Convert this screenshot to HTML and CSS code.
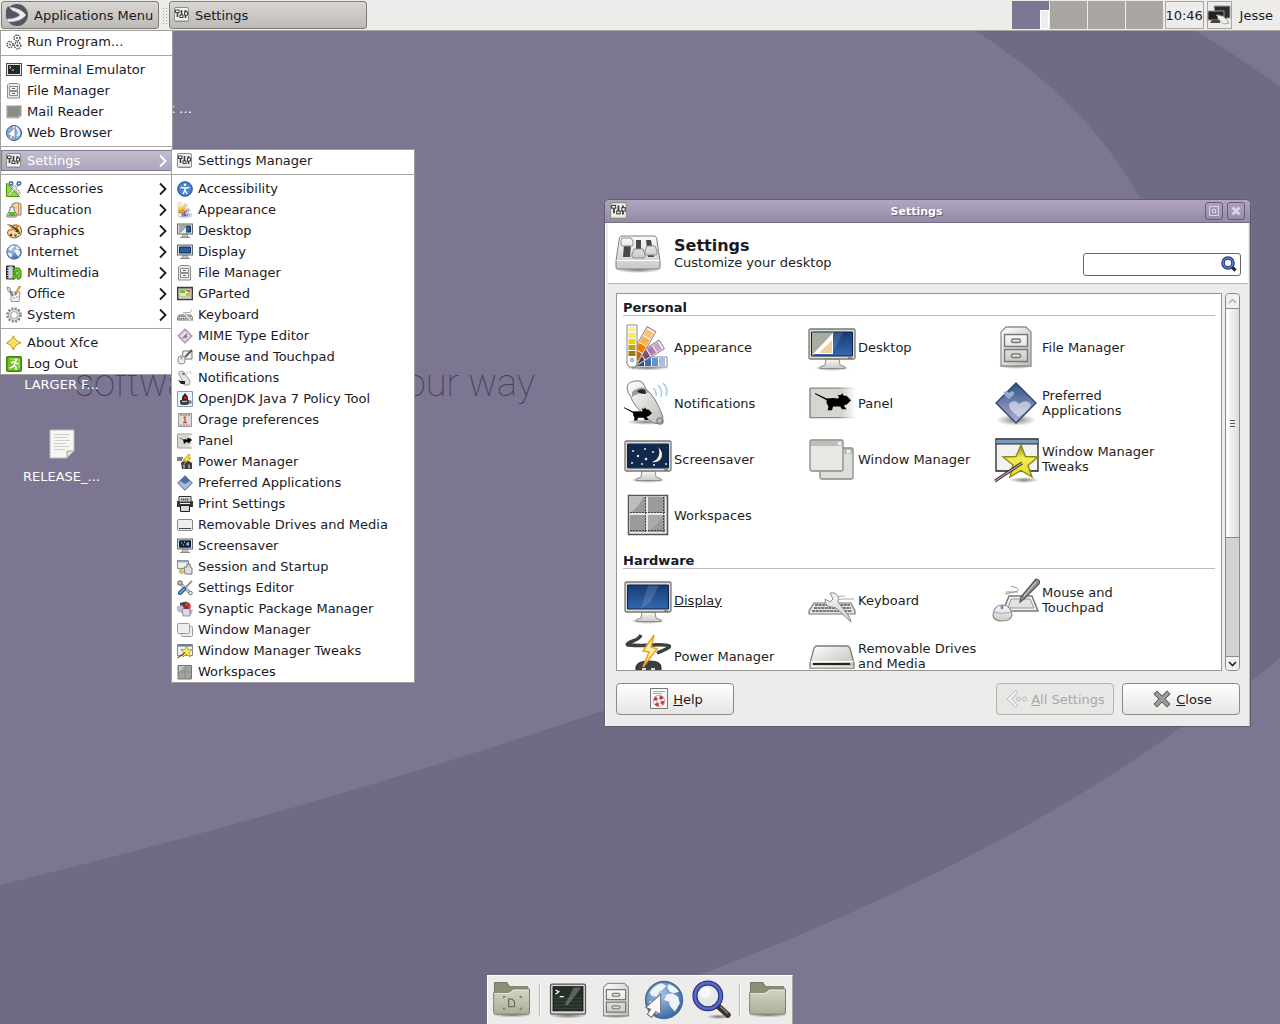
FILE: index.html
```html
<!DOCTYPE html>
<html lang="en">
<head>
<meta charset="utf-8">
<title>Xfce Desktop</title>
<link rel="stylesheet" href="styles.css">
</head>
<body>
<svg class="defs" aria-hidden="true">
<defs>
<linearGradient id="g-light" x1="0" y1="0" x2="0" y2="1"><stop offset="0" stop-color="#fafafa"/><stop offset="1" stop-color="#c9cac6"/></linearGradient>
<linearGradient id="g-metal" x1="0" y1="0" x2="1" y2="1"><stop offset="0" stop-color="#fff"/><stop offset="1" stop-color="#babdb6"/></linearGradient>
<linearGradient id="g-blue" x1="0" y1="0" x2="0" y2="1"><stop offset="0" stop-color="#163a72"/><stop offset="1" stop-color="#3568b0"/></linearGradient>
<linearGradient id="g-pref" x1="0" y1="0" x2="0" y2="1"><stop offset="0" stop-color="#2c5486"/><stop offset="1" stop-color="#b3aed4"/></linearGradient>
<linearGradient id="g-folder" x1="0" y1="0" x2="0" y2="1"><stop offset="0" stop-color="#d3d5c3"/><stop offset="1" stop-color="#acae96"/></linearGradient>
<linearGradient id="g-star" x1="0" y1="0" x2="0" y2="1"><stop offset="0" stop-color="#8f8a20"/><stop offset=".4" stop-color="#f2ec55"/><stop offset="1" stop-color="#e0d820"/></linearGradient>
<linearGradient id="g-fade" x1="0" y1="0" x2="1" y2="0"><stop offset="0" stop-color="#d3d7cf"/><stop offset=".7" stop-color="#d3d7cf"/><stop offset="1" stop-color="#fff"/></linearGradient>
<linearGradient id="g-fadeline" x1="0" y1="0" x2="1" y2="0"><stop offset="0" stop-color="#888a85"/><stop offset=".6" stop-color="#888a85"/><stop offset="1" stop-color="#fff"/></linearGradient>
<radialGradient id="g-globe" cx=".4" cy=".35" r=".7"><stop offset="0" stop-color="#a9c6ea"/><stop offset="1" stop-color="#3465a4"/></radialGradient>
<radialGradient id="g-shadow"><stop offset="0" stop-color="#000" stop-opacity=".5"/><stop offset="1" stop-color="#000" stop-opacity="0"/></radialGradient>
</defs>

<symbol id="i-mixer-small" viewBox="0 0 16 16"><rect x=".5" y=".5" width="14" height="14" rx="1.500" fill="#f0f0ee" stroke="#8b8d88"/><path d="M1 13.500h13" stroke="#c4c5c2"/><path d="M3.500 5v5M7.500 3v5M11.500 3v8" stroke="#3c3f3d" stroke-width="1.600"/><g fill="#fff" stroke="#3c3f3d"><rect x="1.500" y="3" width="3.500" height="2.500"/><rect x="6" y="8" width="3" height="2.500"/><rect x="10.500" y="5" width="3" height="3"/></g></symbol>
<symbol id="i-mixer" viewBox="0 0 48 48"><ellipse cx="24" cy="41" rx="24" ry="3" fill="url(#g-shadow)"/><path d="M8 7h32q2 0 2.600 2L46 32v6q0 2-2 2H4q-2 0-2-2v-6L5.400 9Q6 7 8 7z" fill="url(#g-light)" stroke="#7c7e79"/><path d="M2.500 31.500h43" stroke="#fff"/><path d="M10 16h7l-1 12H9zM22 11h5v10h-5zM32 11h5l3 17h-6z" fill="#454947"/><g fill="url(#g-light)" stroke="#8d8f8a"><path d="M8 9h9l2 3v4l-1 1H8l-1-1v-4zM20 20h9l2 5v3l-1 1H19l-1-1v-3zM33 17h8l2 5v3l-1 1H32l-1-1v-3z"/></g></symbol>
<symbol id="i-xfce" viewBox="0 0 24 24"><circle cx="12" cy="12" r="11" fill="#57545f"/><path d="M4 4q12 1 17 8-5 7-18 7l-1-3q9 0 13-4Q12 8 3 7z" fill="#eee" stroke="#a9a7b4" stroke-width=".7"/><path d="M3 3q5 6 10 9-5 3-12 3V7z" fill="#57545f"/></symbol>
<symbol id="i-run" viewBox="0 0 16 16"><g fill="#fff" stroke="#4a4a4a" stroke-dasharray="1.500 .9" stroke-width="1.300"><circle cx="11" cy="4" r="3"/><circle cx="4" cy="10.500" r="3"/><circle cx="11.500" cy="11.500" r="3.300"/></g><g fill="#666"><circle cx="11" cy="4" r="1"/><circle cx="4" cy="10.500" r="1"/><circle cx="11.500" cy="11.500" r="1.200"/></g></symbol>
<symbol id="i-terminal" viewBox="0 0 48 48"><ellipse cx="24" cy="43" rx="23" ry="3" fill="url(#g-shadow)"/><rect x="3" y="5" width="42" height="36" rx="2" fill="#d5d7d3" stroke="#555753" stroke-width="1.500"/><rect x="6" y="8" width="36" height="29" fill="#253029" stroke="#111"/><path d="M7 22h34M7 26h34M7 30h34M7 34h34" stroke="#3b4a41"/><path d="M31 9h9L24 30h-4z" fill="#fff" opacity=".25"/><path d="M9 12l4 2-4 3M14 20h5" fill="none" stroke="#fff" stroke-width="1.500"/></symbol>
<symbol id="i-terminal-small" viewBox="0 0 16 16"><rect x=".5" y="1.500" width="15" height="12" fill="#e4e5e3" stroke="#4c4f4c"/><rect x="2" y="3" width="12" height="9" fill="#232b28"/><path d="M3.500 4.500l1.500 1-1.500 1M6 8h2" fill="none" stroke="#fff" stroke-width=".9"/></symbol>
<symbol id="i-files" viewBox="0 0 48 48"><ellipse cx="24" cy="43" rx="18" ry="3" fill="url(#g-shadow)"/><path d="M14 4h20l5 5v34H9V9z" fill="url(#g-metal)" stroke="#8d908a" stroke-width="1.300"/><g fill="url(#g-light)" stroke="#777a74" stroke-width="1.400"><path d="M12.500 11.500h23v12h-23zM12.500 26.500h23v12h-23z"/><rect x="19.500" y="16" width="9" height="3.500" rx="1.500"/><rect x="19.500" y="31" width="9" height="3.500" rx="1.500"/></g></symbol>
<symbol id="i-files-small" viewBox="0 0 16 16"><path d="M3 .5h9l1.500 1.500v13h-12V2z" fill="#e8e9e6" stroke="#8b8d88"/><path d="M3.500 3.500h8v4h-8zM3.500 8.500h8v4h-8z" fill="#f4f4f2" stroke="#8b8d88"/><path d="M6 5.500h3M6 10.500h3" stroke="#666"/></symbol>
<symbol id="i-mail" viewBox="0 0 16 16"><path d="M.5 1.500h15v10l-3 2.500H.5z" fill="#9d9f9b" stroke="#c9c9c9"/><path d="M2 3l12-.5v8L12 12.500H2z" fill="#8b8d88"/><path d="M11 14l1.500-3 2.500.5z" fill="#ddd" stroke="#777" stroke-width=".5"/></symbol>
<symbol id="i-globe" viewBox="0 0 48 48"><circle cx="24" cy="24" r="22" fill="url(#g-globe)" stroke="#4a6c9b" stroke-width="2"/><path d="M7 15q5-9 14-11l6 3-5 5-4 2-3 6-6-1zM29 5q9 2 13 9l-6 2-5-2-3-5zM27 17l7-1 7 4 2 8-6 10-6-7-1-5-6-2zM7 25l7 2 5 5-2 5-1 4Q9 37 6 31z" fill="#eef3f8"/></symbol>
<symbol id="i-web" viewBox="0 0 48 48"><use href="#i-globe"/><path d="M20 17v24l-6-3-5 7-5-4 4-6-6-2z" fill="#fafafa" stroke="#777" stroke-width="1.300"/></symbol>
<symbol id="i-web-small" viewBox="0 0 16 16"><circle cx="8" cy="8" r="7.500" fill="#88aeda" stroke="#34588b"/><path d="M8 1v4M10 2q3 3 3 7l-2 2" stroke="#e7eff8" stroke-width="2" fill="none"/><path d="M9 2.500v11L6.500 11l-1 3.500-2-1 1-3.500H1z" fill="#fff" stroke="#7b8088" stroke-width=".8"/></symbol>
<symbol id="i-accessories" viewBox="0 0 16 16"><path d="M.5 2l13 13.500H.5z" fill="#8ae234" stroke="#4e9a06"/><path d="M4 11v1.500h2z" fill="#fff"/><path d="M12 3L3 14M5 4l9 9" stroke="#888a85" stroke-width="2.600"/><path d="M12 3L3 14M5 4l9 9" stroke="#eee" stroke-width="1.200"/><g fill="none" stroke="#3465a4" stroke-width="1.500"><circle cx="5" cy="2.500" r="1.700"/><circle cx="13" cy="2.500" r="1.700"/></g></symbol>
<symbol id="i-education" viewBox="0 0 16 16"><path d="M6 2q5-3 9 0v11H7z" fill="#e6d6bc" stroke="#8f7e62"/><path d="M12.500 2v10" stroke="#e08a3a"/><path d="M4 5h4v3l3 5q0 2-2 2H2q-2 0-1-2l3-5z" fill="#eee" stroke="#777"/><path d="M3.500 10h5l1.500 4H2z" fill="#57b926"/></symbol>
<symbol id="i-graphics" viewBox="0 0 16 16"><path d="M8 2q7-1 7.500 6 0 6-7 7-7-1-7-6 1-3 3-2 3 0 1-3 0-1 2.500-2z" fill="#f5d9a5" stroke="#8f5902"/><path d="M1 1l9 8 4 1-2-4-9-5z" fill="#5a3a10"/><path d="M2 1l8 7" stroke="#e9b96e"/><circle cx="11" cy="4" r="1.300" fill="#f57900"/><circle cx="5" cy="12" r="1.300" fill="#c00"/><circle cx="9.500" cy="12.500" r="1.300" fill="#3465a4"/><circle cx="13" cy="10" r="1.300" fill="#4e9a06"/></symbol>
<symbol id="i-media" viewBox="0 0 16 16"><path d="M.5 1h8v13h-8z" fill="#cfd6e4" stroke="#333"/><path d="M1.500 1v13M7.500 1v13" stroke="#222" stroke-width="1.600" stroke-dasharray="1.500 1"/><path d="M8 3l5 0q2 1 2 4v5q-1 3-4 2V10q2-1 1-4l-2 0v6q-1 3-3 2-1-2 1-3z" fill="#6ed41b" stroke="#3a7d05"/></symbol>
<symbol id="i-office" viewBox="0 0 16 16"><path d="M5 6h9l-1 9.500H5z" fill="#f2f2f2" stroke="#999"/><path d="M2 2l5 8M14 0L9 9" stroke="#777" stroke-width="2"/><path d="M1 1l3 1 1 4-3-1z" fill="#ddd" stroke="#666" stroke-width=".6"/><path d="M13.500 1l-3 6" stroke="#e9a33b" stroke-width="2"/><path d="M7 12h2" stroke="#d77"/><path d="M10 11h2" stroke="#88b"/></symbol>
<symbol id="i-system" viewBox="0 0 16 16"><circle cx="8" cy="8" r="6.500" fill="none" stroke="#888" stroke-width="2.600" stroke-dasharray="2 1.400"/><circle cx="8" cy="8" r="4.500" fill="none" stroke="#8b8b8b" stroke-width="3"/><circle cx="8" cy="8" r="4.500" fill="none" stroke="#dcdcdc" stroke-width="1.800"/></symbol>
<symbol id="i-about" viewBox="0 0 16 16"><path d="M7.500.8q1.500 5.200 7.500 7-6 1.700-7.500 7.200Q6 9.500.5 7.800 6 6 7.500.8z" fill="#f8e35a" stroke="#b8981a"/></symbol>
<symbol id="i-logout" viewBox="0 0 16 16"><rect x=".8" y=".8" width="14.400" height="14.400" rx="1" fill="#73c22b" stroke="#3f7f08" stroke-width="1.500"/><path d="M4 3h9v9" fill="none" stroke="#b4e67e"/><circle cx="10" cy="4" r="1.300" fill="#fff"/><path d="M5 7l3-1.500L9.500 6 8 9.500l2 1.500v3M8 9.500L6.500 11 3.500 12M9.500 7l3 1" fill="none" stroke="#fff" stroke-width="1.500"/></symbol>
<symbol id="i-access" viewBox="0 0 16 16"><circle cx="8" cy="8" r="7.300" fill="#4a82cc" stroke="#204a87"/><circle cx="8" cy="3.800" r="1.300" fill="#fff"/><path d="M3.500 6.500L8 7l4.500-.5M8 6.500V9l-2 4M8 9l2 4" stroke="#fff" stroke-width="1.500" fill="none"/></symbol>
<symbol id="i-appearance" viewBox="0 0 48 48"><ellipse cx="23" cy="45" rx="22" ry="2.500" fill="url(#g-shadow)"/><path d="M8 34h35v10H8z" fill="#fff" stroke="#888"/><path d="M14 35h6v8h-6z" fill="#204a87"/><path d="M21 35h6v8h-6z" fill="#3a6cae"/><path d="M28 35h6v8h-6z" fill="#5e94cf"/><path d="M35 35h6v8h-6z" fill="#9ec0e6"/><g transform="rotate(58 8 40)"><path d="M3 5h10v37H3z" fill="#fff" stroke="#888"/><path d="M4 7h8v6H4z" fill="#c9a4c6"/><path d="M4 14h8v6H4z" fill="#ad7fa8"/><path d="M4 21h8v6H4z" fill="#75507b"/><path d="M4 28h8v8H4z" fill="#4c2f52"/></g><g transform="rotate(30 8 40)"><path d="M3 1h10v41H3z" fill="#fff" stroke="#888"/><path d="M4 3h8v7H4z" fill="#fcc274"/><path d="M4 11h8v7H4z" fill="#fcaf3e"/><path d="M4 19h8v7H4z" fill="#f57900"/><path d="M4 27h8v8H4z" fill="#ce5c00"/></g><path d="M3 2h10v39l-2 3H5l-2-3z" fill="#fff" stroke="#888"/><path d="M4.500 4h7v5h-7z" fill="#fcef94"/><path d="M4.500 10h7v5h-7z" fill="#fce94f"/><path d="M4.500 16h7v5h-7z" fill="#edd400"/><path d="M4.500 22h7v5h-7z" fill="#c4a000"/><path d="M4.500 28h7v5h-7z" fill="#9a7e05"/><circle cx="8" cy="37" r="1.500" fill="none" stroke="#777"/></symbol>
<symbol id="i-display" viewBox="0 0 48 48"><ellipse cx="24" cy="45" rx="18" ry="3" fill="url(#g-shadow)"/><path d="M18 36h13l1 6 5 2v1.500H12V44l5-2z" fill="url(#g-light)" stroke="#8d8f8a"/><rect x="1" y="6" width="46" height="30" rx="1.500" fill="#dcddd7" stroke="#777974" stroke-width="1.300"/><path d="M3.500 9h41v24h-41z" fill="url(#g-blue)" stroke="#0d2447"/><path d="M24 9.500h11L26 27l-9 5z" fill="#fff" opacity=".14"/><path d="M40 35h4" stroke="#555"/></symbol>
<symbol id="i-display-small" viewBox="0 0 16 16"><path d="M6 11h4l1 3H5z" fill="#ccc" stroke="#999"/><path d="M3 14.500h10" stroke="#888"/><rect x=".5" y="1" width="15" height="10" fill="#dcddd7" stroke="#666864"/><path d="M2.500 3h11v6h-11z" fill="#2a5ba3" stroke="#12305c"/></symbol>
<symbol id="i-desktop" viewBox="0 0 48 48"><use href="#i-display"/><path d="M4 9.500h22L5 32.500H4z" fill="#a9aca5"/><path d="M5 31L25 10v21z" fill="#fff"/><path d="M11 30L24 17v13z" fill="#f3cfa0"/></symbol>
<symbol id="i-desktop-small" viewBox="0 0 16 16"><use href="#i-display-small"/><path d="M2 2.500h8L3 9.500H2z" fill="#a9aca5"/><path d="M3 10L9 4v6z" fill="#f5e6cf"/></symbol>
<symbol id="i-saver" viewBox="0 0 48 48"><use href="#i-display"/><path d="M4 9.500h40v23H4z" fill="#13294c"/><path d="M34 12q7 6 2 13-4 3-8 2 6-2 7-7 1-5-1-8z" fill="#fbf6d8"/><g fill="#dfe9fa"><circle cx="9" cy="16" r="1"/><circle cx="14" cy="21" r="1.200"/><circle cx="21" cy="14" r="1"/><circle cx="8" cy="28" r="1"/><circle cx="22" cy="24" r="1.300"/><circle cx="29" cy="17" r="1"/><circle cx="30" cy="30" r="1"/><circle cx="18" cy="29" r="1"/><circle cx="42" cy="29" r="1"/></g></symbol>
<symbol id="i-saver-small" viewBox="0 0 16 16"><use href="#i-display-small"/><path d="M2.500 3h11v6h-11z" fill="#12264a" stroke="#0c1830"/><path d="M4 5h1M6 7h1M7 4h1M9 6h3M11 4v4" stroke="#c9d8ee"/></symbol>
<symbol id="i-gparted" viewBox="0 0 16 16"><path d="M.5 1.500h15v12H.5z" fill="#aaa" stroke="#3c3c3c" stroke-width="1.300"/><path d="M2.500 3.500h11v7h-11z" fill="#f7e2a0"/><path d="M3 4h5v3H3z" fill="#6cc04a"/><path d="M8 4h5v3z" fill="#e9503a"/><path d="M9 10V7h4v3z" fill="#8bd36a"/><path d="M2 12h12" stroke="#eee"/></symbol>
<symbol id="i-keyboard" viewBox="0 0 48 48"><path d="M6 27h37l4 8v3H1v-3z" fill="#e4e5e2" stroke="#777974" stroke-width="1.200"/><path d="M7 29h35M6 32h37M4 35h40" stroke="#777974" stroke-width="2.200" stroke-dasharray="3 .6"/><path d="M46 23H34q-5 1-5-1t8-2" fill="none" stroke="#aaa"/><path d="M22 17l3 6-3 3-5-3q0 8 7 8l4 1 15 14q0-3-3-7L30 26q2-7-4-9z" fill="url(#g-light)" stroke="#8b8d88"/></symbol>
<symbol id="i-keyboard-small" viewBox="0 0 16 16"><path d="M2 8h12l2 3v2H.5v-2z" fill="#ddd" stroke="#777"/><path d="M2 9.500h12M1.500 11.500h13" stroke="#666" stroke-dasharray="1.500 .6"/><path d="M8 5.500h5q2-1 1-3" fill="none" stroke="#aaa"/><path d="M6 6l3 2 5 6" fill="none" stroke="#999" stroke-width="2.500"/><path d="M6 6l3 2 5 6" fill="none" stroke="#eee" stroke-width="1.200"/></symbol>
<symbol id="i-mime" viewBox="0 0 16 16"><path d="M8 .7L15.300 8 8 15.300.7 8z" fill="#c9b3cc" stroke="#75507b" stroke-dasharray="1.200 .6"/><path d="M8 3l5 5-5 5-5-5z" fill="#e6d9e8"/><path d="M6 10l4-4M8 10l2-2" stroke="#8b6a92" stroke-width="1.300"/></symbol>
<symbol id="i-mouse" viewBox="0 0 48 48"><path d="M17 20h23l6 15H11z" fill="#f1f1f0" stroke="#777974" stroke-width="1.500"/><path d="M19 23h19l4 9H16z" fill="#e2e3e0" stroke="#999"/><path d="M13 18q18-3 12-6l-6-2M14 16h12" fill="none" stroke="#999"/><path d="M44 3q5 1 3 5L32 23l-4 3 1-5z" fill="#8e908c" stroke="#555" stroke-width="1.200"/><path d="M44 6L32 20" stroke="#ddd"/><path d="M10 29q9 0 10 10-1 6-10 6T1 39q1-10 9-10z" fill="url(#g-light)" stroke="#888a85" stroke-width="1.200"/><path d="M1.500 36q9 3 18 0" fill="none" stroke="#aaa"/><ellipse cx="10" cy="31" rx="1.500" ry="2.500" fill="#5b93dd"/></symbol>
<symbol id="i-mouse-small" viewBox="0 0 16 16"><path d="M6 2h9v8H5z" fill="#f1f1f0" stroke="#777"/><path d="M15 1L8 8" stroke="#555" stroke-width="1.800"/><rect x="1" y="7" width="7" height="8" rx="3" fill="#eee" stroke="#888"/><path d="M4.500 7.500v3" stroke="#7fb0e6" stroke-width="2"/></symbol>
<symbol id="i-rat" viewBox="0 0 40 22"><path d="M0 0l13 6q8-1 12 0l2-1-2-3 4 0 1-2 2 3 3 0 5 5-4 4-4 2 3 4h-5l-2-3h-8l-1 4h-5l1-4q-3-4-2-7L0 1z" fill="#000"/></symbol>
<symbol id="i-notify" viewBox="0 0 48 48"><ellipse cx="22" cy="43" rx="20" ry="3" fill="url(#g-shadow)"/><path d="M3 8q1-5 8-6 6-1 8 2l3 6q10 8 17 28l-2 6q-6 2-12-3Q8 25 7 18q-4-4-4-10z" fill="url(#g-metal)" stroke="#7b7d78"/><path d="M8 13q7-6 13-4l4 5q-9-1-17 4z" fill="#9ba096"/><path d="M13 12q5-3 8-1l1 4q-7 0-9-3z" fill="#222"/><circle cx="36" cy="42" r="3" fill="none" stroke="#888" stroke-width="1.500"/><path d="M29 9q4 3 3 8M34 6q5 5 3 12M39 4q6 6 3 13" fill="none" stroke="#7fb0e6" stroke-width="1.500" stroke-opacity=".7"/><use href="#i-rat" x="0" y="28" width="28" height="16"/></symbol>
<symbol id="i-notify-small" viewBox="0 0 16 16"><path d="M2 2q3-2 5 0l6 9-1 4H7L3 6Q1 4 2 2z" fill="#e4e5e2" stroke="#999"/><path d="M4 4l3-1 1 2z" fill="#444"/><path d="M1 10l3 1h4v3H4z" fill="#222"/><path d="M10 2l1 2M13 1l1 3" stroke="#9cc2ec"/></symbol>
<symbol id="i-java" viewBox="0 0 16 16"><path d="M.5.500h15v15H.5z" fill="#eef4fb" stroke="#7f9cc0"/><path d="M8 2l3 4v3H5V6z" fill="#222"/><path d="M8 5l-2 3h5z" fill="#d22"/><path d="M3 9h9v4l-2 1H5l-2-1z" fill="#444"/><path d="M5 10.500h5" stroke="#bbb"/><path d="M12 10h2v2h-2" fill="none" stroke="#444"/></symbol>
<symbol id="i-orage" viewBox="0 0 16 16"><path d="M1.500 1.500h13v13h-13z" fill="#ddd" stroke="#999"/><path d="M3 3h10" stroke="#9b8b84" stroke-width="1.500" stroke-dasharray="2 .7"/><path d="M6.500 6L8 5v5M6 10.500h4" fill="none" stroke="#d5482c" stroke-width="1.300"/><path d="M3 13h10" stroke="#888" stroke-dasharray="2 1"/></symbol>
<symbol id="i-panel" viewBox="0 0 48 48"><path d="M2 9h46v30H2z" fill="url(#g-fade)"/><path d="M2 9v30" stroke="#888a85" stroke-width="1.500"/><path d="M2 8.500h46v1.200H2zM2 38h46v1.200H2z" fill="url(#g-fadeline)"/><use href="#i-rat" x="7" y="14" width="36" height="20"/></symbol>
<symbol id="i-panel-small" viewBox="0 0 16 16"><path d="M.5 1.500h15v13H.5z" fill="url(#g-fade)"/><path d="M15 1H.5v14H15" fill="none" stroke="#999b96"/><use href="#i-rat" x="2" y="4" width="13" height="8"/></symbol>
<symbol id="i-power" viewBox="0 0 48 48"><path d="M17 3q-2 4-8 6-8 3-5 4 14 1 24 0 14-1 17 1 3 1-12 7" fill="none" stroke="#3c4041" stroke-width="3.500"/><path d="M12 35q1-6 13-6t12 6v13H12z" fill="#3d4040" stroke="#222"/><path d="M18 36h4v5h-4zM27 36h4v5h-4z" fill="#ddd"/><path d="M30 3L19 19l6 1-6 15 14-18-6-2z" fill="#fff0a8" stroke="#f0a020" stroke-width="1.500"/></symbol>
<symbol id="i-power-small" viewBox="0 0 16 16"><path d="M0 4h6M0 6h5" fill="none" stroke="#555" stroke-width="1.500"/><path d="M4 9q1-2 4-2h4l3 2v6H5z" fill="#3c3f40"/><path d="M7 10.500v4M12 10.500v4" stroke="#aaa" stroke-width="1.500"/><path d="M12 0L6 6h3l-2 4 7-6h-3l2-4z" fill="#ffe95a" stroke="#b08b10" stroke-width=".8"/></symbol>
<symbol id="i-pref" viewBox="0 0 48 48"><ellipse cx="24" cy="41" rx="20" ry="6" fill="url(#g-shadow)"/><path d="M24 4l20 20-20 20L4 24z" fill="url(#g-pref)" stroke="#34436b" stroke-width="1.300"/><path d="M17 20q-6-4-5-7 3-2 5 1 3-3 5-1 1 3-5 7z" fill="#93aacb"/><path d="M27 38Q16 31 17 25q5-6 10 0 8-6 12 1-3 6-12 12z" fill="#e7e7f4" opacity=".65"/></symbol>
<symbol id="i-pref-small" viewBox="0 0 16 16"><path d="M8 .7L15.300 8 8 15.300.7 8z" fill="#a9b8d6" stroke="#4b6390"/><path d="M8 1l5 5-5 3-5-3z" fill="#4a6ea5"/></symbol>
<symbol id="i-print" viewBox="0 0 16 16"><path d="M0 5h16v6H0z" fill="#343736"/><path d="M2 .5h12V6H2z" fill="#ddd" stroke="#333"/><path d="M4 3.500h8" stroke="#555" stroke-dasharray="1.500 .5" stroke-width="2"/><path d="M3 7.500h10" stroke="#eee"/><path d="M3.500 9.500h9v6h-9z" fill="#dadad4" stroke="#222"/></symbol>
<symbol id="i-drive" viewBox="0 0 48 48"><path d="M8 14h32l2 2 4 15v5H2v-5l4-15z" fill="url(#g-metal)" stroke="#7b7d78" stroke-width="1.300"/><path d="M2.500 29.500h43M2.500 35h43" stroke="#fff"/><path d="M5 32h37" stroke="#222" stroke-width="2"/></symbol>
<symbol id="i-drive-small" viewBox="0 0 16 16"><rect x=".5" y="2.500" width="15" height="11" rx="1.500" fill="#efefee" stroke="#888"/><path d="M2 11.500h12" stroke="#444"/></symbol>
<symbol id="i-session" viewBox="0 0 16 16"><path d="M.5 1.500h11v8H.5z" fill="#eee" stroke="#888"/><path d="M1 2.500h10" stroke="#94abc9" stroke-width="2"/><path d="M7 8h3V5h3v3l2 1v6H8z" fill="#ddd" stroke="#777"/><path d="M2 9q3 0 4 3h2l-3 3-3-2h1z" fill="#e7c76a" stroke="#a98532" stroke-width=".6"/></symbol>
<symbol id="i-editor" viewBox="0 0 16 16"><path d="M2 2l12 12" stroke="#777" stroke-width="3"/><path d="M2 2l12 12" stroke="#ddd" stroke-width="1.500"/><circle cx="3" cy="3" r="2" fill="none" stroke="#888" stroke-width="1.500"/><circle cx="13.500" cy="13" r="1.800" fill="#eee" stroke="#777"/><path d="M15 1L8 8" stroke="#999" stroke-width="2"/><path d="M7 9l-4 4" stroke="#204a87" stroke-width="4" stroke-linecap="round"/><path d="M7 9l-4 4" stroke="#6fa3dd" stroke-width="2" stroke-linecap="round"/></symbol>
<symbol id="i-synaptic" viewBox="0 0 16 16"><path d="M3 2l6-1.500 4 2v5H3z" fill="#4a4040"/><path d="M8 1l6 3-1 5-5-2z" fill="#cf3a3a"/><path d="M0 6l5-2 2 3-1 5-5-2z" fill="#bccbdc" stroke="#778" stroke-width=".5"/><path d="M12 8l4 1-2 5-3-1z" fill="#f09aa6"/><path d="M5 8l6-1 2 3v5H6z" fill="#cfe0ee" stroke="#678" stroke-width=".7"/><path d="M7 5h4v3H7z" fill="#a22"/></symbol>
<symbol id="i-wm" viewBox="0 0 48 48"><g stroke="#888a85" stroke-width="1.300"><rect x="12" y="13" width="33" height="31" rx="1.500" fill="#dcded8"/><rect x="2" y="5" width="33" height="31" rx="1.500" fill="#e6e8e3"/></g><path d="M3 6h31v5H3zM36 14h8v5h-8z" fill="#bcbfb7"/><path d="M30 7l3 3m0-3l-3 3M39 15l3 3m0-3l-3 3" stroke="#fff" stroke-width="1.200"/></symbol>
<symbol id="i-wm-small" viewBox="0 0 16 16"><g fill="#eeefed" stroke="#999b96"><rect x="4.500" y="4.500" width="11" height="10" rx="1"/><rect x=".5" y="1.500" width="12" height="10" rx="1"/></g></symbol>
<symbol id="i-tweaks" viewBox="0 0 48 48"><ellipse cx="32" cy="45" rx="15" ry="3" fill="url(#g-shadow)"/><path d="M4 4h42v32H4z" fill="#f2f2f2" stroke="#222" stroke-width="1.300"/><path d="M4.500 5h41v4h-41z" fill="#7b9abf"/><path d="M4 9h42" stroke="#222"/><path d="M29 10l4.500 11.500L46 22l-10 8.500L40 42l-11-6.500L18 42l3-12-10-8 13-.5z" fill="url(#g-star)" stroke="#8d8718" stroke-width="1.400"/><path d="M3 46l27-18" stroke="#222" stroke-width="3"/><path d="M3 46l27-18" stroke="#d9a0a4" stroke-width="1.300"/></symbol>
<symbol id="i-tweaks-small" viewBox="0 0 16 16"><path d="M.5 1.500h15v11H.5z" fill="#f2f2f2" stroke="#888"/><path d="M1 2.500h14" stroke="#5b7fae" stroke-width="2"/><path d="M9.500 3l1.500 3.500h4.500L12 9.500l1.500 4.500-4-2.500-4 2.500L7 9.500 3.500 6.500H8z" fill="#f5ec4d" stroke="#a39a1d" stroke-width=".8"/><path d="M.5 15L8 9.500" stroke="#824a4e" stroke-width="1.500"/></symbol>
<symbol id="i-work" viewBox="0 0 48 48"><path d="M4.500 4.500h39v39h-39z" fill="#e8e8e8" stroke="#555" stroke-width="1.500"/><path d="M6 6h16v16H6zM24 6h17v16H24zM6 24h16v17H6zM24 24h17v17H24z" fill="#9a9a98"/><path d="M6 6h13q-4 10-13 16z" fill="#fff" opacity=".35"/><path d="M24 24h15q-4 10-15 16z" fill="#fff" opacity=".15"/><path d="M6 21.500h35M21.500 6v35M6 39.500h35M39.500 6v35" stroke="#444" stroke-dasharray="2 1"/></symbol>
<symbol id="i-work-small" viewBox="0 0 16 16"><path d="M1 1.500h13.500v13.500H1z" fill="#a2a2a0" stroke="#777"/><path d="M8 2v12M2 8h12" stroke="#8a8a88"/><path d="M2 2h6l-6 6z" fill="#c5c5c5"/></symbol>
<symbol id="i-search" viewBox="0 0 48 48"><ellipse cx="32" cy="44" rx="15" ry="3" fill="url(#g-shadow)"/><path d="M31 31l12 11" stroke="#3b342f" stroke-width="7" stroke-linecap="round"/><path d="M34 32l9 8" stroke="#85786c" stroke-width="2"/><circle cx="19" cy="19" r="15.500" fill="#e4e8ea" fill-opacity=".9" stroke="#222c6e" stroke-width="6"/><circle cx="19" cy="19" r="15.500" fill="none" stroke="#5468c9" stroke-width="3.500"/><circle cx="16" cy="15" r="7" fill="#fff" opacity=".7"/></symbol>
<symbol id="i-search-small" viewBox="0 0 16 16"><path d="M10 10l4.500 4.500" stroke="#2e2a26" stroke-width="3.200"/><circle cx="7" cy="7" r="5" fill="#f2f5fa" stroke="#22307f" stroke-width="3.600"/><circle cx="7" cy="7" r="5" fill="none" stroke="#5f7fd6" stroke-width="1.600"/></symbol>
<symbol id="i-folder" viewBox="0 0 48 48"><ellipse cx="24" cy="42" rx="24" ry="3" fill="url(#g-shadow)"/><path d="M3 3h15l3 5h22v12H3z" fill="#8d8f78" stroke="#66684f"/><path d="M2 15h18l5-4h20v28q0 2-2 2H4q-2 0-2-2z" fill="url(#g-folder)" stroke="#7c7e68" stroke-width="1.200"/><path d="M3 16h18l5-4h18" fill="none" stroke="#eeefe4"/></symbol>
<symbol id="i-folder-doc" viewBox="0 0 48 48"><use href="#i-folder"/><path d="M20 23h4l3 3v6h-7z" fill="none" stroke="#6d6f5a" stroke-width="1.500"/><path d="M14 22v-2h2M33 20h2v2M14 33v2h2M33 35h2v-2" fill="none" stroke="#777963" stroke-width="1.500"/></symbol>
<symbol id="i-help" viewBox="0 0 24 24"><path d="M3.500 1.500h17v20h-17z" fill="#f8f8f8" stroke="#777"/><path d="M6 4.500h12M6 6.500h9" stroke="#aaa"/><circle cx="12" cy="14" r="4" fill="none" stroke="#888" stroke-width="4"/><circle cx="12" cy="14" r="4" fill="none" stroke="#fff" stroke-width="3"/><circle cx="12" cy="14" r="4" fill="none" stroke="#d8383a" stroke-width="3" stroke-dasharray="3.500 2.800"/></symbol>
<symbol id="i-back" viewBox="0 0 24 24"><path d="M10.500 3.500l2 2L7 12l5.500 6.500-2 2L2 12z" fill="#efefef" stroke="#bbb"/><circle cx="13.500" cy="12" r="2" fill="none" stroke="#bbb"/><circle cx="19.500" cy="12" r="2" fill="none" stroke="#bbb"/></symbol>
<symbol id="i-close" viewBox="0 0 24 24"><path d="M7 7l10 10M17 7L7 17" stroke="#4c4e4b" stroke-width="5" stroke-linecap="square"/><path d="M7 7l10 10M17 7L7 17" stroke="#9a9c98" stroke-width="3.500" stroke-linecap="square"/></symbol>
<symbol id="i-user" viewBox="0 0 24 24"><path d="M7 3h16v12h-4v2H9z" fill="#2c2f2e" stroke="#999"/><path d="M1 8h16v9H1z" fill="#222" stroke="#999"/><path d="M3 20h10v-3H5z" fill="#444"/><path d="M10 12l6 1 3 3 3 4-5 1-6-5z" fill="#f3f2ee" stroke="#777" stroke-width=".6"/><path d="M9 12.500q2-1 4 0" stroke="#e7a849" fill="none"/></symbol>
<symbol id="i-doc" viewBox="0 0 26 30"><path d="M1 1h24v21l-7 7H1z" fill="#f6f6f4" stroke="#bbb"/><path d="M5 5.500h16M5 8.500h14M5 11.500h16M5 14.500h12M5 17.500h15M5 20.500h11" stroke="#cfcfcd"/><path d="M25 22h-7v7z" fill="#ddd" stroke="#aaa"/></symbol>
<symbol id="i-chev" viewBox="0 0 8 14"><path d="M1 1.500L6.500 7 1 12.500" fill="none" stroke="currentColor" stroke-width="1.800"/></symbol>
</svg>

<main class="desktop">
  <svg class="wallpaper" viewBox="0 0 1280 1024" preserveAspectRatio="none" aria-hidden="true">
    <rect width="1280" height="1024" fill="#7c7692"/>
    <path d="M940 10Q975 28 1010 55Q1090 110 1140 198C1250 400 1000 560 605 710Q310 810 0 885V1024H605L702 974Q1000 860 1180 728Q1240 695 1300 640V102Q1240 55 1160 10z" fill="#706b84"/>
    <g class="slogan"><text x="75" y="396">software,</text><text x="535" y="396" text-anchor="end">your way</text></g>
  </svg>

  <div class="desk-icons">
    <a class="desk-icon wide" href="#">k …</a>
    <a class="desk-icon" href="#">LARGER F...</a>
    <a class="desk-icon" href="#"><svg class="doc"><use href="#i-doc"/></svg>RELEASE_...</a>
  </div>

  <header class="panel">
    <button class="task apps"><svg class="ic24"><use href="#i-xfce"/></svg>Applications Menu</button>
    <span class="grip"></span>
    <button class="task window-task"><svg class="ic16"><use href="#i-mixer-small"/></svg>Settings</button>
    <div class="tray">
      <div class="pager"><button class="cell active" aria-label="Workspace 1"><i></i></button><button class="cell" aria-label="Workspace 2"></button><button class="cell" aria-label="Workspace 3"></button><button class="cell" aria-label="Workspace 4"></button></div>
      <time class="clock">10:46</time>
      <button class="user" aria-label="User"><svg class="ic24"><use href="#i-user"/></svg></button>
      <span class="name">Jesse</span>
    </div>
  </header>

  <nav class="menu main-menu" aria-label="Applications">
    <a href="#"><svg class="ic16"><use href="#i-run"/></svg>Run Program...</a>
    <hr>
    <a href="#"><svg class="ic16"><use href="#i-terminal-small"/></svg>Terminal Emulator</a>
    <a href="#"><svg class="ic16"><use href="#i-files-small"/></svg>File Manager</a>
    <a href="#"><svg class="ic16"><use href="#i-mail"/></svg>Mail Reader</a>
    <a href="#"><svg class="ic16"><use href="#i-web-small"/></svg>Web Browser</a>
    <hr>
    <a href="#" class="selected"><svg class="ic16"><use href="#i-mixer-small"/></svg>Settings<svg class="chev"><use href="#i-chev"/></svg></a>
    <hr>
    <a href="#"><svg class="ic16"><use href="#i-accessories"/></svg>Accessories<svg class="chev"><use href="#i-chev"/></svg></a>
    <a href="#"><svg class="ic16"><use href="#i-education"/></svg>Education<svg class="chev"><use href="#i-chev"/></svg></a>
    <a href="#"><svg class="ic16"><use href="#i-graphics"/></svg>Graphics<svg class="chev"><use href="#i-chev"/></svg></a>
    <a href="#"><svg class="ic16"><use href="#i-globe"/></svg>Internet<svg class="chev"><use href="#i-chev"/></svg></a>
    <a href="#"><svg class="ic16"><use href="#i-media"/></svg>Multimedia<svg class="chev"><use href="#i-chev"/></svg></a>
    <a href="#"><svg class="ic16"><use href="#i-office"/></svg>Office<svg class="chev"><use href="#i-chev"/></svg></a>
    <a href="#"><svg class="ic16"><use href="#i-system"/></svg>System<svg class="chev"><use href="#i-chev"/></svg></a>
    <hr>
    <a href="#"><svg class="ic16"><use href="#i-about"/></svg>About Xfce</a>
    <a href="#"><svg class="ic16"><use href="#i-logout"/></svg>Log Out</a>
  </nav>

  <nav class="menu sub-menu" aria-label="Settings">
    <a href="#"><svg class="ic16"><use href="#i-mixer-small"/></svg>Settings Manager</a>
    <hr>
    <a href="#"><svg class="ic16"><use href="#i-access"/></svg>Accessibility</a>
    <a href="#"><svg class="ic16"><use href="#i-appearance"/></svg>Appearance</a>
    <a href="#"><svg class="ic16"><use href="#i-desktop-small"/></svg>Desktop</a>
    <a href="#"><svg class="ic16"><use href="#i-display-small"/></svg>Display</a>
    <a href="#"><svg class="ic16"><use href="#i-files-small"/></svg>File Manager</a>
    <a href="#"><svg class="ic16"><use href="#i-gparted"/></svg>GParted</a>
    <a href="#"><svg class="ic16"><use href="#i-keyboard-small"/></svg>Keyboard</a>
    <a href="#"><svg class="ic16"><use href="#i-mime"/></svg>MIME Type Editor</a>
    <a href="#"><svg class="ic16"><use href="#i-mouse-small"/></svg>Mouse and Touchpad</a>
    <a href="#"><svg class="ic16"><use href="#i-notify-small"/></svg>Notifications</a>
    <a href="#"><svg class="ic16"><use href="#i-java"/></svg>OpenJDK Java 7 Policy Tool</a>
    <a href="#"><svg class="ic16"><use href="#i-orage"/></svg>Orage preferences</a>
    <a href="#"><svg class="ic16"><use href="#i-panel-small"/></svg>Panel</a>
    <a href="#"><svg class="ic16"><use href="#i-power-small"/></svg>Power Manager</a>
    <a href="#"><svg class="ic16"><use href="#i-pref-small"/></svg>Preferred Applications</a>
    <a href="#"><svg class="ic16"><use href="#i-print"/></svg>Print Settings</a>
    <a href="#"><svg class="ic16"><use href="#i-drive-small"/></svg>Removable Drives and Media</a>
    <a href="#"><svg class="ic16"><use href="#i-saver-small"/></svg>Screensaver</a>
    <a href="#"><svg class="ic16"><use href="#i-session"/></svg>Session and Startup</a>
    <a href="#"><svg class="ic16"><use href="#i-editor"/></svg>Settings Editor</a>
    <a href="#"><svg class="ic16"><use href="#i-synaptic"/></svg>Synaptic Package Manager</a>
    <a href="#"><svg class="ic16"><use href="#i-wm-small"/></svg>Window Manager</a>
    <a href="#"><svg class="ic16"><use href="#i-tweaks-small"/></svg>Window Manager Tweaks</a>
    <a href="#"><svg class="ic16"><use href="#i-work-small"/></svg>Workspaces</a>
  </nav>

  <section class="window">
    <div class="titlebar">
      <svg class="ic18"><use href="#i-mixer-small"/></svg>
      <span class="title">Settings</span>
      <button class="tb" aria-label="Maximize"><svg viewBox="0 0 16 16"><path d="M3.500 3.500h9v9h-9zM6.500 6.500h3v3h-3z" fill="none" stroke="#dcd6e5"/></svg></button>
      <button class="tb" aria-label="Close window"><svg viewBox="0 0 16 16"><path d="M4.500 4.500l7 7M11.500 4.500l-7 7" stroke="#dcd6e5" stroke-width="2.500"/></svg></button>
    </div>
    <div class="frame">
      <div class="head">
        <svg class="ic48"><use href="#i-mixer"/></svg>
        <div class="head-text"><h1>Settings</h1><p>Customize your desktop</p></div>
        <div class="search"><input type="text" aria-label="Search"><svg class="ic16"><use href="#i-search-small"/></svg></div>
      </div>
      <div class="body">
        <div class="view">
          <div class="list">
            <h2>Personal</h2>
            <div class="grid">
              <a href="#"><svg class="ic48"><use href="#i-appearance"/></svg><span>Appearance</span></a>
              <a href="#"><svg class="ic48"><use href="#i-desktop"/></svg><span>Desktop</span></a>
              <a href="#"><svg class="ic48"><use href="#i-files"/></svg><span>File Manager</span></a>
              <a href="#"><svg class="ic48"><use href="#i-notify"/></svg><span>Notifications</span></a>
              <a href="#"><svg class="ic48"><use href="#i-panel"/></svg><span>Panel</span></a>
              <a href="#"><svg class="ic48"><use href="#i-pref"/></svg><span>Preferred Applications</span></a>
              <a href="#"><svg class="ic48"><use href="#i-saver"/></svg><span>Screensaver</span></a>
              <a href="#"><svg class="ic48"><use href="#i-wm"/></svg><span>Window Manager</span></a>
              <a href="#"><svg class="ic48"><use href="#i-tweaks"/></svg><span>Window Manager Tweaks</span></a>
              <a href="#"><svg class="ic48"><use href="#i-work"/></svg><span>Workspaces</span></a>
            </div>
            <h2>Hardware</h2>
            <div class="grid">
              <a href="#" class="hover"><svg class="ic48"><use href="#i-display"/></svg><span>Display</span></a>
              <a href="#"><svg class="ic48"><use href="#i-keyboard"/></svg><span>Keyboard</span></a>
              <a href="#"><svg class="ic48"><use href="#i-mouse"/></svg><span>Mouse and Touchpad</span></a>
              <a href="#"><svg class="ic48"><use href="#i-power"/></svg><span>Power Manager</span></a>
              <a href="#"><svg class="ic48"><use href="#i-drive"/></svg><span>Removable Drives and Media</span></a>
            </div>
          </div>
          <div class="scroll">
            <button class="up" aria-label="Scroll up"><svg viewBox="0 0 9 6"><path d="M1 5l3.500-3.500L8 5" fill="none" stroke="#aaa" stroke-width="1.300"/></svg></button>
            <div class="thumb"></div>
            <button class="down" aria-label="Scroll down"><svg viewBox="0 0 9 6"><path d="M1 1l3.500 3.500L8 1" fill="none" stroke="#222" stroke-width="1.600"/></svg></button>
          </div>
        </div>
        <div class="actions">
          <button class="btn"><svg class="ic24"><use href="#i-help"/></svg><span><u>H</u>elp</span></button>
          <button class="btn all" disabled><svg class="ic24"><use href="#i-back"/></svg><span><u>A</u>ll Settings</span></button>
          <button class="btn"><svg class="ic24"><use href="#i-close"/></svg><span><u>C</u>lose</span></button>
        </div>
      </div>
    </div>
  </section>

  <footer class="dock">
    <button aria-label="Home"><svg><use href="#i-folder-doc"/></svg></button>
    <i></i>
    <button aria-label="Terminal"><svg><use href="#i-terminal"/></svg></button>
    <button aria-label="Files"><svg><use href="#i-files"/></svg></button>
    <button aria-label="Web"><svg><use href="#i-web"/></svg></button>
    <button aria-label="Find"><svg><use href="#i-search"/></svg></button>
    <i></i>
    <button aria-label="Folder"><svg><use href="#i-folder"/></svg></button>
  </footer>
</main>
</body>
</html>
```
FILE: styles.css
```css
* { box-sizing: border-box; }
body { margin: 0; font: 13px/15px "DejaVu Sans", sans-serif; color: #1a1a26; }
button { font: inherit; color: inherit; padding: 0; margin: 0; border: 0; background: none; }
a { color: inherit; text-decoration: none; }
svg { display: block; flex: none; }
.defs { position: absolute; width: 0; height: 0; }
.ic16 { width: 16px; height: 16px; }
.ic18 { width: 18px; height: 18px; }
.ic24 { width: 24px; height: 24px; }
.ic48 { width: 48px; height: 48px; }

.desktop { position: relative; min-height: 100vh; overflow: hidden; background: #7c7692; }
.wallpaper { position: absolute; inset: 0; width: 100%; height: 100%; }
.slogan { font: 100 38px Roboto, "Open Sans", sans-serif; fill: #45415a; }

/* Desktop shortcuts */
.desk-icons { position: absolute; left: 0; top: 101px; width: 123px; color: #fff; }
.desk-icon { display: flex; flex-direction: column; align-items: center; gap: 10px; }
.desk-icon.wide { width: 192px; align-items: flex-end; margin-bottom: 261px; }
.doc { width: 26px; height: 30px; margin-top: 37px; }

/* Top panel */
.panel { position: relative; display: flex; align-items: center; height: 31px; padding: 0 7px 0 1px; background: #edeceb; border-bottom: 1px solid #a9a6a1; }
.task { display: flex; align-items: center; height: 28px; border: 1px solid #7f7d7a; border-radius: 3px; background: linear-gradient(#d8d6d3, #bdbab6); }
.apps { width: 158px; padding-left: 3px; gap: 5px; }
.window-task { width: 198px; padding-left: 4px; gap: 5px; }
.grip { width: 5px; height: 17px; margin: 0 2px 0 3px; background: radial-gradient(circle, #aaa 30%, transparent 40%) 0 0 / 3px 3px; }
.tray { display: flex; align-items: center; margin-left: auto; }
.pager { display: flex; gap: 1px; margin-right: 2px; }
.cell { width: 37px; height: 28px; background: #aaa7a3; }
.cell.active { display: flex; align-items: flex-end; justify-content: flex-end; background: #7c7692; }
.cell i { width: 9px; height: 19px; background: #edecf2; border: 1px solid #fff; }
.clock { width: 39px; height: 28px; border: 1px solid #a9a6a1; display: flex; align-items: center; justify-content: center; }
.user { width: 25px; height: 28px; border: 1px solid #a9a6a1; margin: 0 8px 0 3px; display: flex; align-items: center; justify-content: center; }

/* Menus */
.menu { position: absolute; background: #fff; border: 1px solid #a09f9b; }
.menu a { display: flex; align-items: center; gap: 5px; height: 21px; padding: 0 5px; white-space: nowrap; }
.menu hr { margin: 3px 0; border: 0; height: 1px; background: #a9a6a1; }
.main-menu { left: 0; top: 30px; width: 173px; }
.sub-menu { left: 171px; top: 149px; width: 244px; }
.menu a.selected { color: #fff; background: linear-gradient(#c3bdcd, #aba4ba); box-shadow: inset 0 0 0 1px #7f7892; }
.chev { width: 8px; height: 14px; margin-left: auto; }

/* Settings window */
.window { position: absolute; left: 604px; top: 199px; width: 647px; border: 1px solid #5f5b6b; border-radius: 6px 6px 0 0; background: #edeceb; overflow: hidden; }
.titlebar { display: flex; align-items: center; gap: 4px; height: 23px; padding: 0 5px; background: linear-gradient(#b0a6c0, #948aa6); border-bottom: 1px solid #756c85; color: #fff; }
.title { flex: 1; text-align: center; font-weight: bold; font-size: 11px; text-shadow: 1px 1px 1px #5f5670; }
.tb { width: 18px; height: 18px; border: 1px solid #665d78; border-radius: 3px; }
.tb svg { width: 16px; height: 16px; }
.frame { padding: 0 1px 2px 2px; border-left: 1px solid #fff; border-right: 1px solid #bbb9b5; }
.head { display: flex; align-items: center; height: 61px; padding: 0 7px 0 6px; background: #fff; border-bottom: 1px solid #bbb9b6; }
.head-text { flex: 1; margin-left: 12px; }
.head h1 { margin: 0; font-size: 16px; line-height: 19px; }
.head p { margin: 0; color: #222; }
.search { display: flex; align-items: center; width: 158px; height: 23px; margin-top: 22px; padding-right: 3px; border: 1px solid #666; border-radius: 3px; background: #fff; }
.search input { flex: 1; min-width: 0; height: 100%; border: 0; background: none; font: inherit; outline: 0; }
.body { padding: 9px 8px; }
.view { display: flex; gap: 3px; height: 378px; }
.list { flex: 1; padding: 6px; background: #fff; border: 1px solid #989591; overflow: hidden; }
h2 { margin: 0; font-size: 13px; line-height: 15px; height: 16px; border-bottom: 1px solid #bbb; }
.grid { display: grid; grid-template-columns: repeat(3, 184px); grid-auto-rows: 56px; padding: 3px 0 10px 1px; }
.grid a { display: flex; align-items: center; gap: 2px; color: #1e1e1e; }
.grid span { width: 122px; }
.hover span { text-decoration: underline; }
.scroll { display: flex; flex-direction: column; width: 15px; border: 1px solid #8d8b88; border-radius: 4px; background: #d4d2d0; overflow: hidden; }
.scroll button { height: 14px; background: #f1f0ef; display: flex; align-items: center; justify-content: center; }
.scroll button svg { width: 9px; height: 6px; }
.thumb { height: 230px; border: solid #8d8b88; border-width: 1px 0; background: repeating-linear-gradient(#555 0 1px, transparent 1px 3px) center / 5px 7px no-repeat, linear-gradient(90deg, #fff, #dddbd9); }
.scroll .down { margin-top: auto; border-top: 1px solid #8d8b88; }
.actions { display: flex; gap: 8px; padding-top: 12px; }
.btn { display: flex; align-items: center; justify-content: center; gap: 2px; width: 118px; height: 32px; border: 1px solid #8b8986; border-radius: 4px; background: linear-gradient(#fff, #f3f2f1 50%, #e6e5e3); }
.btn.all { margin-left: auto; color: #aaa8a5; border-color: #b5b2ae; background: #e8e7e5; }

/* Launcher dock */
.dock { position: absolute; bottom: 0; left: 50%; transform: translateX(-50%); display: flex; align-items: center; height: 49px; background: #edeceb; border: 1px solid #fff; border-right-color: #aaa7a3; border-bottom: 0; }
.dock button { width: 48px; height: 48px; display: flex; align-items: center; justify-content: center; }
.dock button svg { width: 40px; height: 40px; }
.dock i { width: 8px; height: 34px; background: linear-gradient(90deg, transparent 3px, #bdbab6 3px 4px, #fff 4px 5px, transparent 5px); }
```
